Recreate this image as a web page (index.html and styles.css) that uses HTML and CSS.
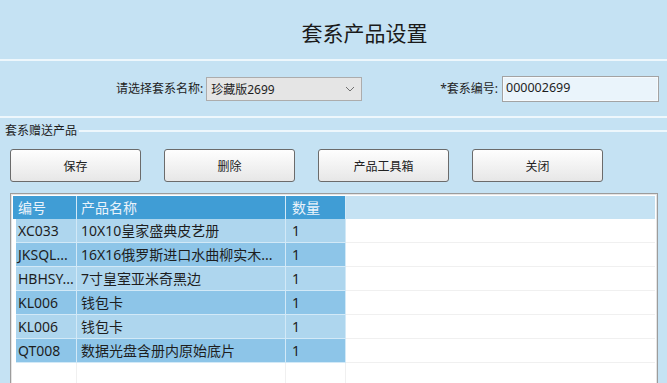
FILE: index.html
```html
<!DOCTYPE html>
<html lang="zh-CN">
<head>
    <meta charset="UTF-8">
    <meta name="viewport" content="width=device-width, initial-scale=1.0">
    <title>套系产品设置</title>
    <link rel="stylesheet" href="styles.css">
</head>
<body>
    <div class="title-bar">
        <h1 class="title">套系产品设置</h1>
    </div>
    <div class="divider"></div>

    <div class="form-row">
        <span class="field-label">请选择套系名称:</span>
        <div class="combo">
            <span class="combo-text">珍藏版2699</span>
            <svg class="combo-arrow" width="10" height="6" viewBox="0 0 10 6">
                <polyline points="1,1 5,5 9,1" fill="none" stroke="#707070" stroke-width="1"/>
            </svg>
        </div>
        <span class="field-label code-label">*套系编号:</span>
        <div class="text-box">000002699</div>
    </div>
    <div class="divider"></div>

    <div class="group-head">
        <span class="group-title">套系赠送产品</span>
        <div class="group-line"></div>
    </div>

    <div class="toolbar">
        <button class="btn">保存</button>
        <button class="btn">删除</button>
        <button class="btn">产品工具箱</button>
        <button class="btn">关闭</button>
    </div>

    <div class="grid">
        <div class="grid-head">
            <div class="cell col-no head-no">编号</div>
            <div class="cell col-name">产品名称</div>
            <div class="cell col-qty">数量</div>
            <div class="cell col-fill"></div>
        </div>

        <div class="grid-row odd">
            <div class="row-head"></div>
            <div class="cell col-no">XC033</div>
            <div class="cell col-name">10X10皇家盛典皮艺册</div>
            <div class="cell col-qty">1</div>
            <div class="cell col-fill"></div>
        </div>
        <div class="grid-row even">
            <div class="row-head"></div>
            <div class="cell col-no">JKSQL...</div>
            <div class="cell col-name">16X16俄罗斯进口水曲柳实木...</div>
            <div class="cell col-qty">1</div>
            <div class="cell col-fill"></div>
        </div>
        <div class="grid-row odd">
            <div class="row-head"></div>
            <div class="cell col-no">HBHSY...</div>
            <div class="cell col-name">7寸皇室亚米奇黑边</div>
            <div class="cell col-qty">1</div>
            <div class="cell col-fill"></div>
        </div>
        <div class="grid-row even">
            <div class="row-head"></div>
            <div class="cell col-no">KL006</div>
            <div class="cell col-name">钱包卡</div>
            <div class="cell col-qty">1</div>
            <div class="cell col-fill"></div>
        </div>
        <div class="grid-row odd">
            <div class="row-head"></div>
            <div class="cell col-no">KL006</div>
            <div class="cell col-name">钱包卡</div>
            <div class="cell col-qty">1</div>
            <div class="cell col-fill"></div>
        </div>
        <div class="grid-row even">
            <div class="row-head"></div>
            <div class="cell col-no">QT008</div>
            <div class="cell col-name">数据光盘含册内原始底片</div>
            <div class="cell col-qty">1</div>
            <div class="cell col-fill"></div>
        </div>
        <div class="grid-row empty">
            <div class="row-head"></div>
            <div class="cell col-no"></div>
            <div class="cell col-name"></div>
            <div class="cell col-qty"></div>
            <div class="cell col-fill"></div>
        </div>
    </div>
</body>
</html>
```

FILE: styles.css
```css
html, body {
    margin: 0;
    padding: 0;
}
body {
    width: 667px;
    height: 383px;
    overflow: hidden;
    background-color: #c5e2f3;
    font-family: "Noto Sans", "Noto Sans CJK SC", sans-serif;
    color: #1e1e1e;
}
.title-bar {
    height: 59px;
    box-sizing: border-box;
    padding: 7px 0 0 62px;
    display: flex;
    align-items: center;
    justify-content: center;
}
.title {
    margin: 0;
    font-size: 21px;
    font-weight: normal;
    line-height: 26px;
    color: #1a1a1a;
}
.divider {
    height: 2px;
    background-color: #eef7fc;
}
.form-row {
    height: 55px;
    display: flex;
    align-items: center;
    padding: 0 8px 0 116px;
}
.field-label {
    font-size: 12px;
    line-height: 16px;
    margin-right: 3px;
}
.combo {
    width: 156px;
    height: 24px;
    box-sizing: border-box;
    border: 1px solid #acacac;
    background-color: #e5e5e5;
    display: flex;
    align-items: center;
    justify-content: space-between;
    padding: 0 6px 0 4px;
}
.combo-text {
    font-size: 12px;
}
.code-label {
    margin-left: auto;
    margin-right: 4px;
}
.text-box {
    width: 157px;
    height: 26px;
    box-sizing: border-box;
    border: 1px solid #a3a3a3;
    box-shadow: inset 0 0 0 1px #f6fafd;
    background-color: #eaf4fb;
    font-size: 12.5px;
    line-height: 22px;
    padding-left: 3px;
    margin-top: 1px;
}
.group-head {
    display: flex;
    align-items: center;
    margin-top: 5px;
    height: 15px;
    padding-left: 5px;
}
.group-title {
    font-size: 12px;
    line-height: 15px;
}
.group-line {
    flex: 1;
    height: 2px;
    margin-left: 2px;
    background-color: #eef7fc;
}
.toolbar {
    display: flex;
    gap: 23px;
    padding-left: 10px;
    margin-top: 11px;
}
.btn {
    width: 131px;
    height: 33px;
    border: 1px solid #6b6b6b;
    border-radius: 3px;
    background: linear-gradient(#fefefe, #e7e7e7);
    font-family: "Noto Sans", "Noto Sans CJK SC", sans-serif;
    font-size: 12px;
    color: #222;
    padding: 0;
}
.grid {
    margin: 11px 0 0 10px;
    width: 648px;
    height: 200px;
    box-sizing: border-box;
    border: 1px solid #9c9c9c;
    box-shadow: inset 0 0 0 1px #e4e4e4;
    background-color: #fff;
    padding: 2px;
}
.grid-head,
.grid-row {
    display: flex;
}
.grid-head {
    height: 23px;
}
.grid-row {
    height: 24px;
}
.cell {
    box-sizing: border-box;
    font-size: 14px;
    line-height: 23px;
    padding-left: 4px;
    white-space: nowrap;
    overflow: hidden;
    border-right: 1px solid #d2e9f7;
}
.grid-row .cell {
    border-bottom: 1px solid #d2e9f7;
}
.grid-head .cell {
    background-color: #409dd5;
    color: #eaf3fb;
}
.grid-head .col-fill {
    background-color: #c5e2f3;
    border-right: none;
}
.row-head {
    width: 3px;
    background-color: #fff;
}
.col-no {
    width: 61px;
    padding-left: 2px;
}
.head-no {
    width: 64px;
    padding-left: 5px;
}
.col-name {
    width: 209px;
}
.col-qty {
    width: 60px;
    padding-left: 6px;
}
.col-fill {
    flex: 1;
}
.odd .cell {
    background-color: #aed6ee;
}
.even .cell {
    background-color: #8dc5e8;
}
.grid-row .col-fill,
.empty .cell {
    background-color: #fff;
    border-bottom-color: #f0f0f0;
    border-right-color: #f0f0f0;
}
.grid-row .col-fill {
    border-right: none;
}
```
